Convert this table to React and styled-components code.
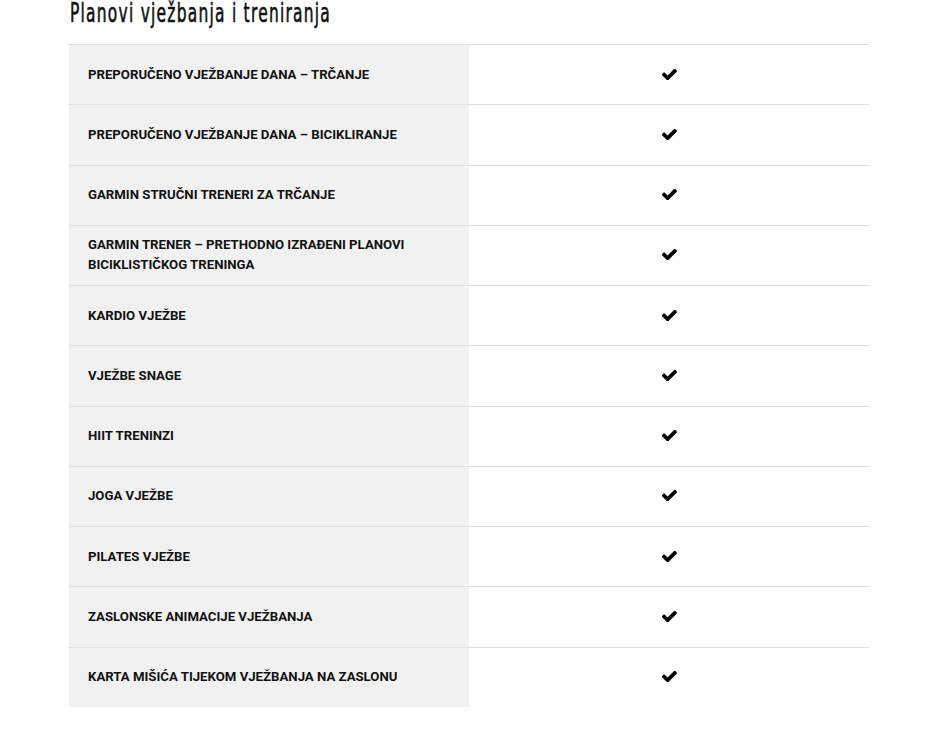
import React from "react";
import styled, { createGlobalStyle } from "styled-components";

const Global = createGlobalStyle`
  html, body { margin: 0; padding: 0; background: #fff; }
  body { font-family: Roboto, "Liberation Sans", sans-serif; color: #111; }
`;

const Page = styled.div`
  width: 800px;
  padding: 0 0 0 69px;
`;

const Title = styled.h2`
  margin: 0;
  padding: 0 0 0 1px;
  height: 44px;
  font-weight: 400;
`;

const TitleText = styled.span`
  display: inline-block;
  font-family: "DejaVu Sans Condensed", "Liberation Sans", sans-serif;
  font-weight: 400;
  font-size: 26px;
  line-height: 27px;
  letter-spacing: 1.9px;
  color: #111;
  -webkit-text-stroke: 0.6px #111;
  transform: scaleX(0.66);
  transform-origin: left center;
  white-space: nowrap;
`;

const Table = styled.div`
  display: flex;
  flex-direction: column;
`;

const Row = styled.div`
  display: grid;
  grid-template-columns: 400px 400px;
  height: 60.27px;
  box-sizing: border-box;
  border-top: 1px solid #dedede;
`;

const Label = styled.div`
  background: #f1f1f1;
  display: flex;
  align-items: center;
  padding: 0 19px;
  font-weight: 700;
  font-size: 13.2px;
  line-height: 20px;
  text-transform: uppercase;
  color: #111;
`;

const Cell = styled.div`
  display: flex;
  align-items: center;
  justify-content: center;
  padding-bottom: 1px;
`;

const CheckIcon = () => (
  <svg width="15" height="11" viewBox="141 400 1530 1030" fill="#000" aria-hidden="true">
    <path d="M1671 566q0 40-28 68l-724 724-136 136q-28 28-68 28t-68-28l-136-136-362-362q-28-28-28-68t28-68l136-136q28-28 68-28t68 28l294 295 656-657q28-28 68-28t68 28l136 136q28 28 28 68z" />
  </svg>
);

const rows = [
  "Preporučeno vježbanje dana – trčanje",
  "Preporučeno vježbanje dana – bicikliranje",
  "Garmin stručni treneri za trčanje",
  <>Garmin trener – prethodno izrađeni planovi<br />biciklističkog treninga</>,
  "Kardio vježbe",
  "Vježbe snage",
  "HIIT treninzi",
  "Joga vježbe",
  "Pilates vježbe",
  "Zaslonske animacije vježbanja",
  "Karta mišića tijekom vježbanja na zaslonu",
];

export default function App() {
  return (
    <Page>
      <Global />
      <Title><TitleText>Planovi vježbanja i treniranja</TitleText></Title>
      <Table>
        {rows.map((r, i) => (
          <Row key={i}>
            <Label>{r}</Label>
            <Cell><CheckIcon /></Cell>
          </Row>
        ))}
      </Table>
    </Page>
  );
}
